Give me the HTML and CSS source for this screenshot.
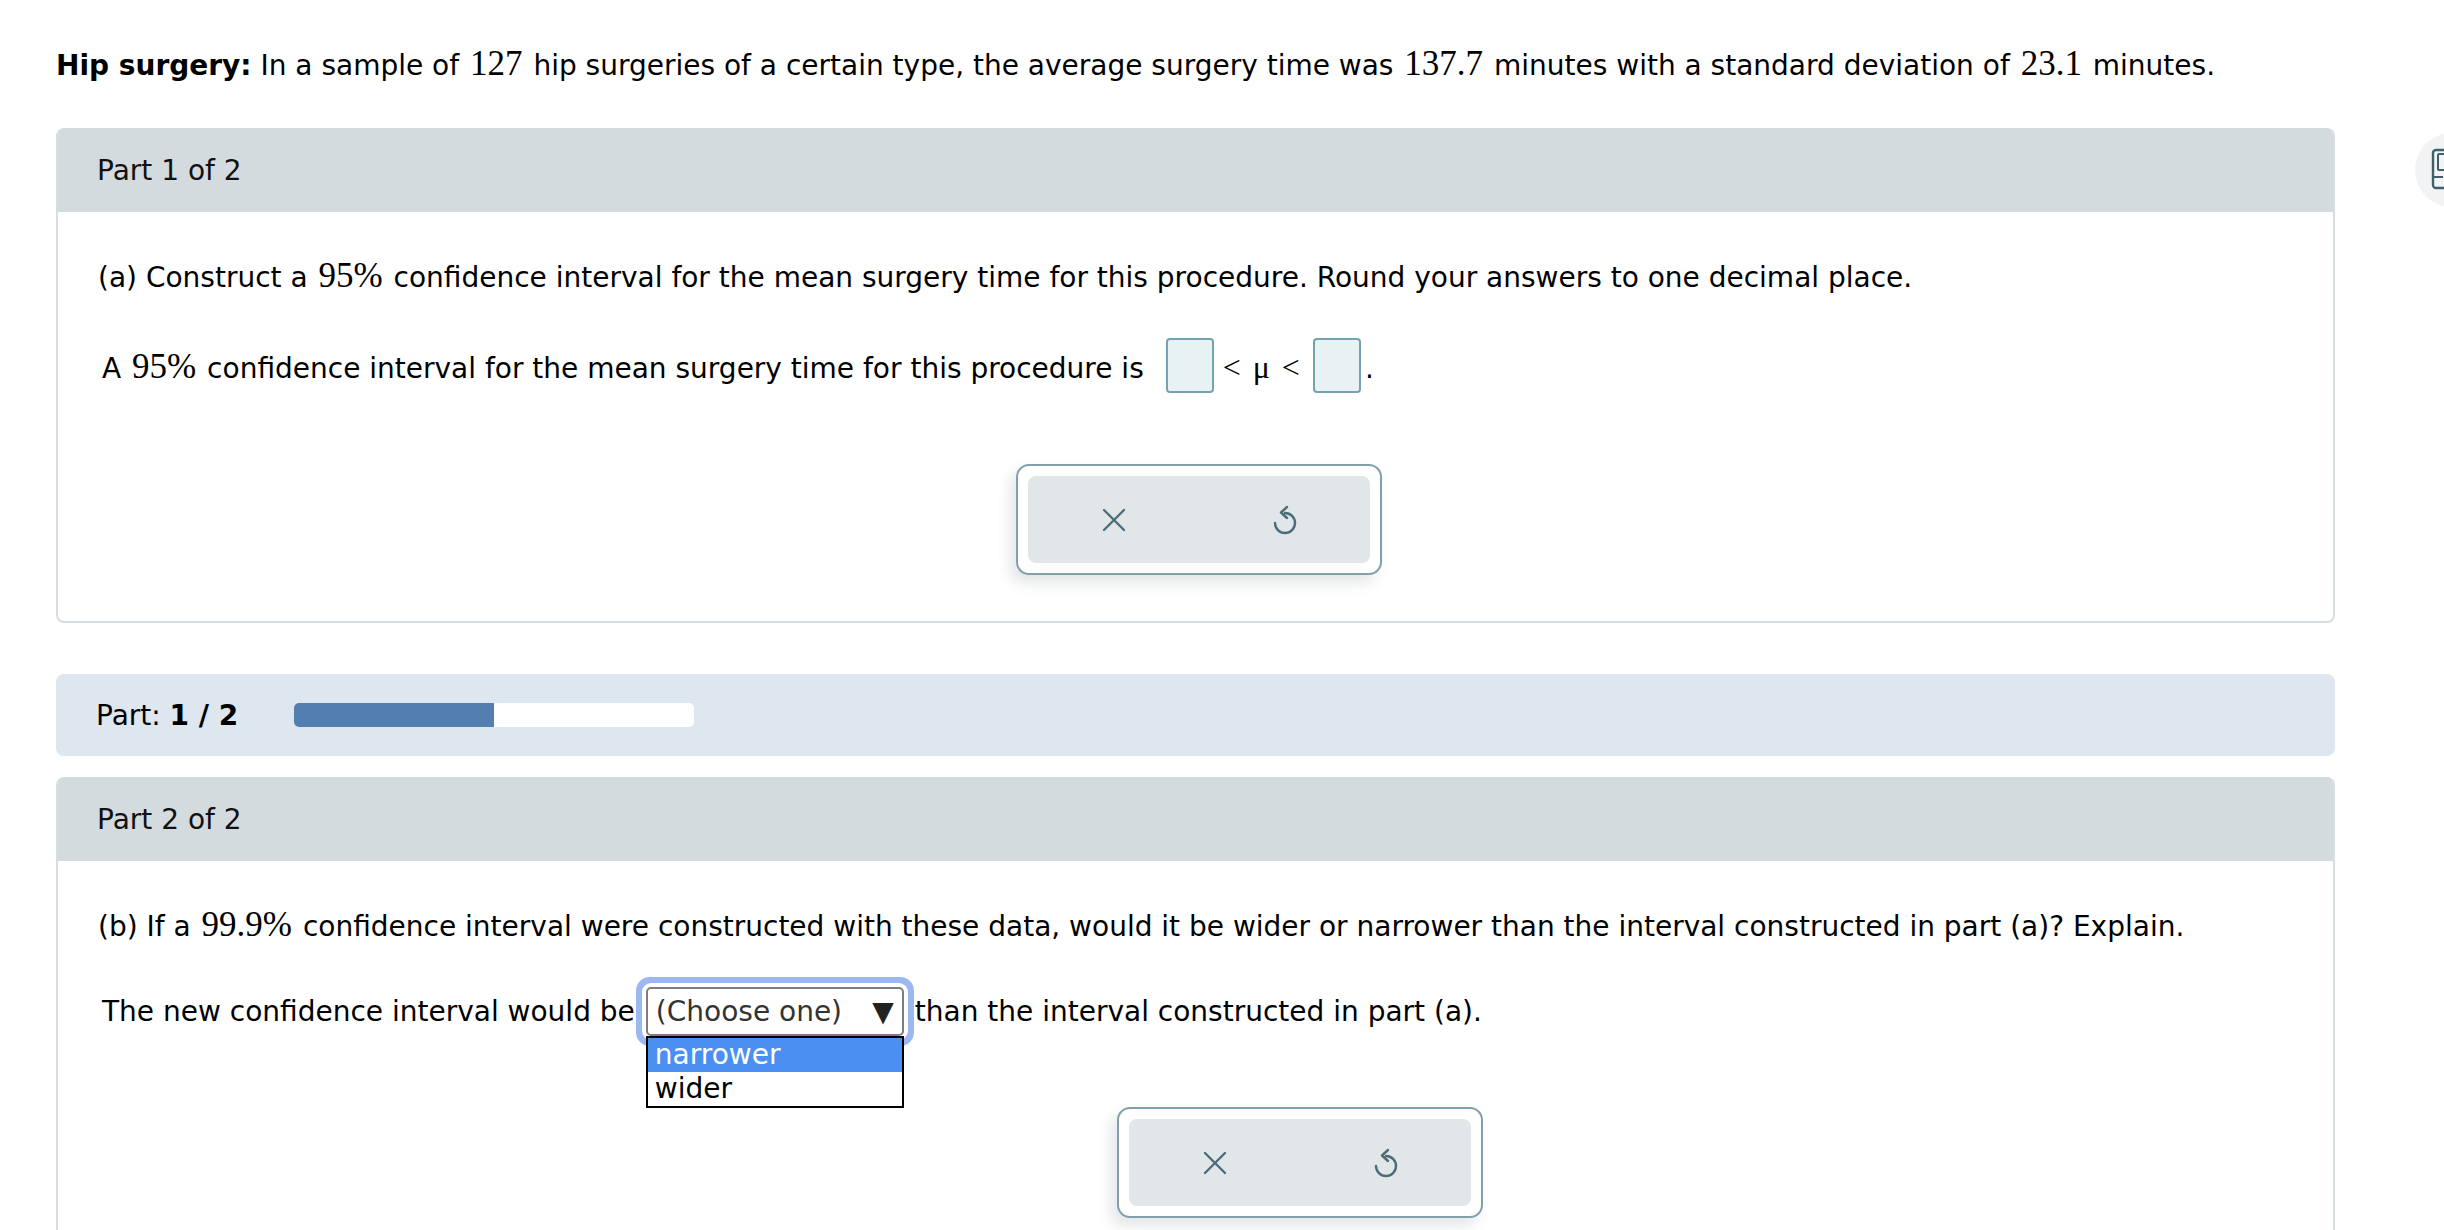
FILE: index.html
```html
<!DOCTYPE html>
<html>
<head>
<meta charset="utf-8">
<link rel="stylesheet" href="styles.css">
</head>
<body>
<div class="page">
  <p class="intro"><b>Hip surgery:</b> In a sample of <span class="m">127</span> hip surgeries of a certain type, the average surgery time was <span class="m">137.7</span> minutes with a standard deviation of <span class="m">23.1</span> minutes.</p>

  <section class="part">
    <div class="part-head">Part 1 of 2</div>
    <div class="part-body">
      <p class="q">(a) Construct a <span class="m">95%</span> confidence interval for the mean surgery time for this procedure. Round your answers to one decimal place.</p>
      <p class="ans">A <span class="m">95%</span> confidence interval for the mean surgery time for this procedure is <span class="box"></span><span class="m op"><span>&lt;</span><span class="mu">μ</span><span>&lt;</span></span><span class="box"></span>.</p>
      <div class="tools tools-a">
        <div class="tools-in">
          <span class="tbtn"><svg width="26" height="26" viewBox="0 0 26 26"><path d="M3 3 L23 23 M23 3 L3 23" stroke="#4b6c78" stroke-width="2.4" stroke-linecap="round" fill="none"/></svg></span>
          <span class="tbtn"><svg width="28" height="30" viewBox="0 0 28 30"><path d="M14 8 A10 10 0 1 1 4 18" stroke="#4b6c78" stroke-width="2.4" stroke-linecap="round" fill="none"/><path d="M16 2 L10 7.5 L16 13" stroke="#4b6c78" stroke-width="2.4" stroke-linecap="round" stroke-linejoin="round" fill="none"/></svg></span>
        </div>
      </div>
    </div>
  </section>

  <div class="progress">
    <span class="plabel">Part: <b>1 / 2</b></span>
    <div class="bar"><div class="fill" style="width:50%"></div></div>
  </div>

  <section class="part part2">
    <div class="part-head">Part 2 of 2</div>
    <div class="part-body">
      <p class="q">(b) If a <span class="m">99.9%</span> confidence interval were constructed with these data, would it be wider or narrower than the interval constructed in part (a)? Explain.</p>
      <p class="ans2">The new confidence interval would be<span class="select"><span class="sel-text">(Choose one)</span><span class="sel-arrow">▼</span><span class="sel-list"><span class="opt hi">narrower</span><span class="opt">wider</span></span></span>than the interval constructed in part (a).</p>
      <div class="tools tools-b">
        <div class="tools-in">
          <span class="tbtn"><svg width="26" height="26" viewBox="0 0 26 26"><path d="M3 3 L23 23 M23 3 L3 23" stroke="#4b6c78" stroke-width="2.4" stroke-linecap="round" fill="none"/></svg></span>
          <span class="tbtn"><svg width="28" height="30" viewBox="0 0 28 30"><path d="M14 8 A10 10 0 1 1 4 18" stroke="#4b6c78" stroke-width="2.4" stroke-linecap="round" fill="none"/><path d="M16 2 L10 7.5 L16 13" stroke="#4b6c78" stroke-width="2.4" stroke-linecap="round" stroke-linejoin="round" fill="none"/></svg></span>
        </div>
      </div>
    </div>
  </section>

  <div class="side-btn">
    <svg width="40" height="44" viewBox="0 0 40 44"><rect x="2" y="2" width="34" height="38" rx="3" stroke="#3f5f6b" stroke-width="2.4" fill="none"/><rect x="7" y="6" width="24" height="16" rx="1" stroke="#3f5f6b" stroke-width="2" fill="none"/><path d="M2 29 H12" stroke="#3f5f6b" stroke-width="2"/></svg>
  </div>
</div>
</body>
</html>
```

FILE: styles.css
```css
html, body {
  margin: 0;
  padding: 0;
  background: #ffffff;
}

body {
  font-family: "DejaVu Sans", Verdana, sans-serif;
  font-size: 28px;
  color: #000;
  overflow: hidden;
  height: 1230px;
}

.page {
  position: relative;
  padding: 46px 0 0 56px;
  width: 2279px;
}

p {
  margin: 0;
  line-height: 40px;
}

.m {
  font-family: "Liberation Serif", "Times New Roman", serif;
  font-size: 35px;
  line-height: 1;
  padding: 0 2px;
}

.intro {
  margin-bottom: 42px;
}

.part {
  border: 2px solid #d6dde0;
  border-top: none;
  border-radius: 8px;
  overflow: hidden;
}

.part-head {
  background: #d3dbdf;
  height: 84px;
  display: flex;
  align-items: center;
  padding-left: 41px;
  margin: 0 -2px;
  color: #111;
}

.part-body {
  padding: 46px 0 46px 40px;
}

.q {
  margin-bottom: 40px;
}

.ans {
  padding-left: 4px;
}

.box {
  display: inline-block;
  width: 44px;
  height: 51px;
  background: #e8f1f4;
  border: 2px solid #73a3b3;
  border-radius: 4px;
  vertical-align: -15px;
  margin: 0 9px 0 13px;
}

.box + .op + .box {
  margin: 0 4px 0 13px;
}

.op {
  font-size: 32px;
  padding: 0;
}

.mu {
  margin: 0 12px;
}

.tools {
  width: 342px;
  border: 2px solid #82a0ab;
  border-radius: 13px;
  padding: 10px;
  background: #fff;
  box-shadow: -6px 8px 14px rgba(60, 80, 90, 0.14);
}

.tools-a {
  margin: 71px 0 0 918px;
}

.tools-b {
  margin: 71px 0 0 1019px;
}

.tools-in {
  display: flex;
  height: 87px;
  background: #e1e6e9;
  border-radius: 8px;
}

.tbtn {
  flex: 1;
  display: flex;
  align-items: center;
  justify-content: center;
}

.progress {
  margin-top: 51px;
  height: 82px;
  background: #dee7ef;
  border-radius: 8px;
  display: flex;
  align-items: center;
  padding-left: 40px;
}

.plabel {
  width: 198px;
}

.bar {
  width: 400px;
  height: 24px;
  background: #fff;
  border-radius: 5px;
  overflow: hidden;
}

.fill {
  height: 100%;
  background: #537eb0;
}

.part2 {
  margin-top: 21px;
}

.ans2 {
  padding-left: 4px;
}

.select {
  position: relative;
  display: inline-flex;
  align-items: center;
  justify-content: space-between;
  box-sizing: border-box;
  width: 258px;
  height: 49px;
  margin: 0 11px;
  padding: 0 8px 0 8px;
  border: 2px solid #7d7d7d;
  border-radius: 5px;
  background: #fff;
  box-shadow: 0 0 0 4px #fff, 0 0 0 10px #9db7f3;
  vertical-align: baseline;
  color: #333;
  line-height: 28px;
}

.sel-arrow {
  font-size: 28px;
  color: #222;
}

.sel-list {
  position: absolute;
  left: -2px;
  top: 47px;
  width: 258px;
  box-sizing: border-box;
  border: 2px solid #000;
  background: #fff;
  display: flex;
  flex-direction: column;
  color: #000;
}

.opt {
  height: 34px;
  line-height: 34px;
  padding-left: 7px;
}

.opt.hi {
  background: #4a8ff2;
  color: #fff;
}

.side-btn {
  position: absolute;
  left: 2415px;
  top: 133px;
  width: 74px;
  height: 74px;
  border-radius: 50%;
  background: #f1f3f5;
  display: flex;
  align-items: center;
  padding-left: 16px;
  box-sizing: border-box;
}
```
